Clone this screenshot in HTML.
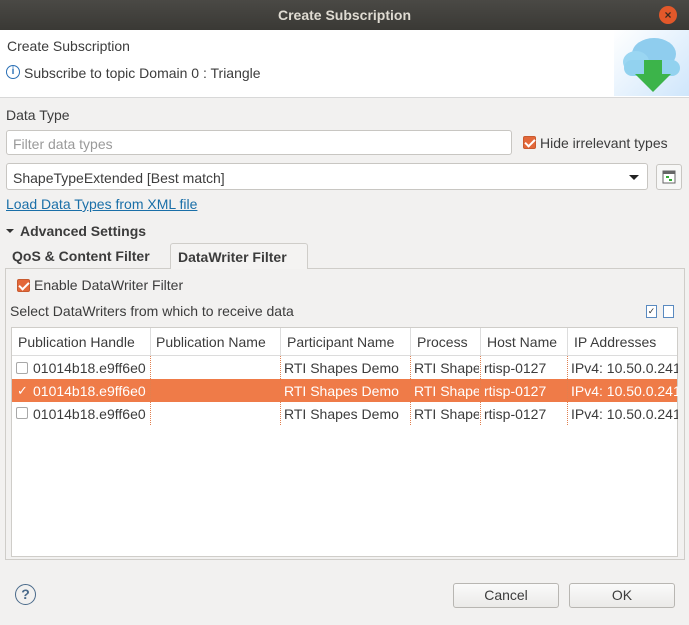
<!DOCTYPE html>
<html><head><style>
*{box-sizing:border-box;margin:0;padding:0}
body{width:689px;height:625px;background:#f2f1f0;font-family:"Liberation Sans",sans-serif;font-size:14px;color:#3c3c3c;position:relative;overflow:hidden}
.a{position:absolute;white-space:nowrap}
.cb{position:absolute;width:13px;height:13px;border-radius:2px;background:#e3683a;border:1px solid #c85a2f}
.cb:after{content:"";position:absolute;left:3px;top:0px;width:4px;height:8px;border:solid #fff;border-width:0 2px 2px 0;transform:rotate(45deg)}
.ecb{position:absolute;width:12px;height:12px;border:1px solid #a8a8a8;border-radius:2px;background:#fff}
.col{position:absolute;top:28px;height:69px;border-left:1px dotted #e08050}
</style></head><body>
<div class="a" style="left:0;top:0;width:689px;height:30px;background:linear-gradient(#4a4945,#3a3935);color:#dfdbd2;font-weight:bold;text-align:center;line-height:30px;font-size:14px">Create Subscription</div>
<div class="a" style="left:659px;top:6px;width:18px;height:18px;border-radius:50%;background:#e2582a;color:#3a2a20;font-size:12px;font-weight:bold;text-align:center;line-height:18px">×</div>
<div class="a" style="left:0;top:30px;width:689px;height:68px;background:#fff;border-bottom:1px solid #d8d8d8"></div>
<div class="a" style="left:614px;top:30px;width:75px;height:66px;background:linear-gradient(135deg,#fff,#cfe6fb)"></div>
<svg class="a" style="left:618px;top:32px" width="70" height="62"><ellipse cx="36" cy="22" rx="22" ry="16" fill="#8fcdee"/><ellipse cx="18" cy="30" rx="13" ry="11" fill="#9ad6f2"/><rect x="6" y="28" width="56" height="16" rx="8" fill="#92d2ef"/><path d="M26 28h18v14h9L35 60 17 42h9z" fill="#3cb44a"/></svg>
<div class="a" style="left:7px;top:38px">Create Subscription</div>
<div class="a" style="left:6px;top:65px;width:14px;height:14px;border:1px solid #2a6fb5;border-radius:50%;font-size:10px;color:#2a6fb5;text-align:center;line-height:12px;font-weight:bold">i</div>
<div class="a" style="left:24px;top:65px">Subscribe to topic Domain 0 : Triangle</div>
<div class="a" style="left:6px;top:107px">Data Type</div>
<div class="a" style="left:6px;top:130px;width:506px;height:25px;background:#fff;border:1px solid #c8c6c2;border-radius:3px;color:#9a9a9a;padding:5px 6px">Filter data types</div>
<div class="cb" style="left:523px;top:136px"></div>
<div class="a" style="left:540px;top:135px">Hide irrelevant types</div>
<div class="a" style="left:6px;top:163px;width:642px;height:27px;background:#fff;border:1px solid #c8c6c2;border-radius:3px;padding:6px 6px">ShapeTypeExtended [Best match]</div>
<div class="a" style="left:629px;top:175px;border:5px solid transparent;border-top:5px solid #222;border-bottom:0"></div>
<div class="a" style="left:656px;top:164px;width:26px;height:26px;border:1px solid #c8c6c2;border-radius:3px;background:#f7f7f6"><svg width="24" height="24"><rect x="6" y="6" width="12" height="12" fill="#fff" stroke="#666"/><rect x="6" y="6" width="12" height="3" fill="#666"/><rect x="9" y="11" width="3" height="2" fill="#3a3"/><rect x="12" y="14" width="3" height="2" fill="#3a3"/></svg></div>
<div class="a" style="left:6px;top:196px;color:#1a6fa8;text-decoration:underline">Load Data Types from XML file</div>
<div class="a" style="left:6px;top:229px;border:4px solid transparent;border-top:4px solid #333;border-bottom:0"></div>
<div class="a" style="left:20px;top:223px;font-weight:bold">Advanced Settings</div>
<div class="a" style="left:5px;top:268px;width:680px;height:292px;border:1px solid #cfcdc9;background:#f2f1f0"></div>
<div class="a" style="left:12px;top:248px;font-weight:bold">QoS &amp; Content Filter</div>
<div class="a" style="left:170px;top:243px;width:138px;height:26px;border:1px solid #cfcdc9;border-bottom:none;border-radius:3px 3px 0 0;background:#f4f3f2;padding:5px 7px;font-weight:bold">DataWriter Filter</div>
<div class="cb" style="left:17px;top:279px"></div>
<div class="a" style="left:34px;top:277px">Enable DataWriter Filter</div>
<div class="a" style="left:10px;top:303px">Select DataWriters from which to receive data</div>
<div class="a" style="left:646px;top:305px;width:11px;height:13px;border:1px solid #5a8ac0;background:#fff;font-size:9px;line-height:11px;text-align:center;color:#333">✓</div>
<div class="a" style="left:663px;top:305px;width:11px;height:13px;border:1px solid #5a8ac0;background:#fff"></div>
<div class="a" style="left:11px;top:327px;width:667px;height:230px;background:#fff;border:1px solid #cfcdc9;overflow:hidden">
 <div class="a" style="left:0;top:51px;width:667px;height:23px;background:#ef7b48"></div>
 <div class="col" style="left:138px"></div><div class="col" style="left:268px"></div><div class="col" style="left:398px"></div><div class="col" style="left:468px"></div><div class="col" style="left:555px"></div>
 <div class="a" style="left:0;top:0;width:667px;height:28px;background:#fff;border-bottom:1px solid #dcdcdc"></div>
 <div class="a" style="left:138px;top:0;height:28px;border-left:1px solid #ddd"></div><div class="a" style="left:268px;top:0;height:28px;border-left:1px solid #ddd"></div><div class="a" style="left:398px;top:0;height:28px;border-left:1px solid #ddd"></div><div class="a" style="left:468px;top:0;height:28px;border-left:1px solid #ddd"></div><div class="a" style="left:555px;top:0;height:28px;border-left:1px solid #ddd"></div>
 <div class="a" style="left:6px;top:6px">Publication Handle</div><div class="a" style="left:144px;top:6px">Publication Name</div><div class="a" style="left:275px;top:6px">Participant Name</div><div class="a" style="left:405px;top:6px">Process</div><div class="a" style="left:475px;top:6px">Host Name</div><div class="a" style="left:562px;top:6px">IP Addresses</div>
</div>
<div class="a" style="left:11px;top:357px;width:667px;height:70px;font-size:14px">
 <div class="ecb" style="left:5px;top:5px"></div><div class="a" style="left:22px;top:3px;width:115px;overflow:hidden">01014b18.e9ff6e0</div><div class="a" style="left:273px;top:3px">RTI Shapes Demo</div><div class="a" style="left:403px;top:3px;width:65px;overflow:hidden">RTI Shapes</div><div class="a" style="left:473px;top:3px">rtisp-0127</div><div class="a" style="left:560px;top:3px;width:107px;overflow:hidden">IPv4: 10.50.0.241</div>
 <div style="color:#fff"><div class="a" style="left:6px;top:26px;font-size:13px">✓</div><div class="a" style="left:22px;top:26px;width:115px;overflow:hidden">01014b18.e9ff6e0</div><div class="a" style="left:273px;top:26px">RTI Shapes Demo</div><div class="a" style="left:403px;top:26px;width:65px;overflow:hidden">RTI Shapes</div><div class="a" style="left:473px;top:26px">rtisp-0127</div><div class="a" style="left:560px;top:26px;width:107px;overflow:hidden">IPv4: 10.50.0.241</div></div>
 <div class="ecb" style="left:5px;top:50px"></div><div class="a" style="left:22px;top:49px;width:115px;overflow:hidden">01014b18.e9ff6e0</div><div class="a" style="left:273px;top:49px">RTI Shapes Demo</div><div class="a" style="left:403px;top:49px;width:65px;overflow:hidden">RTI Shapes</div><div class="a" style="left:473px;top:49px">rtisp-0127</div><div class="a" style="left:560px;top:49px;width:107px;overflow:hidden">IPv4: 10.50.0.241</div>
</div>
<div class="a" style="left:15px;top:584px;width:21px;height:21px;border:1.5px solid #4a6a8a;border-radius:50%;text-align:center;line-height:18px;color:#4a6a8a;font-weight:bold;font-size:14px">?</div>
<div class="a" style="left:453px;top:583px;width:106px;height:25px;border:1px solid #b8b6b2;border-radius:3px;background:linear-gradient(#fafafa,#ebeae8);text-align:center;line-height:23px">Cancel</div>
<div class="a" style="left:569px;top:583px;width:106px;height:25px;border:1px solid #b8b6b2;border-radius:3px;background:linear-gradient(#fafafa,#ebeae8);text-align:center;line-height:23px">OK</div>
</body></html>
